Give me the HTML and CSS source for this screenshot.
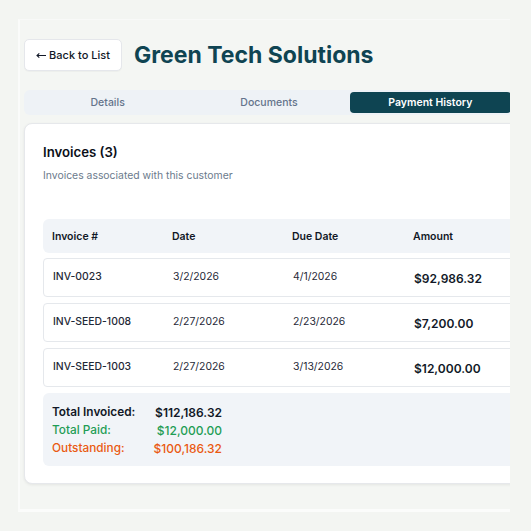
FILE: index.html
```html
<!DOCTYPE html>
<html lang="en">
<head>
<meta charset="utf-8">
<title>Green Tech Solutions</title>
<link rel="stylesheet" href="styles.css">
</head>
<body>
<div class="frame">
  <div class="page">
    <header class="page-header">
      <button class="back-btn"><svg class="arrow" width="10" height="7" viewBox="0 0 10 7" aria-hidden="true"><path d="M10 3.5H1M3.3 1.3L1 3.5L3.3 5.7" fill="none" stroke="#111827" stroke-width="1.1"/></svg>Back to List</button>
      <h1 class="title">Green Tech Solutions</h1>
    </header>
    <nav class="tabs">
      <div class="tab">Details</div>
      <div class="tab">Documents</div>
      <div class="tab active">Payment History</div>
    </nav>
    <section class="card">
      <h2 class="card-title">Invoices (3)</h2>
      <p class="card-sub">Invoices associated with this customer</p>
      <div class="table">
        <div class="thead">
          <div>Invoice #</div><div>Date</div><div>Due Date</div><div>Amount</div>
        </div>
        <div class="row">
          <div class="inv">INV-0023</div><div>3/2/2026</div><div>4/1/2026</div><div class="amt">$92,986.32</div>
        </div>
        <div class="row">
          <div class="inv">INV-SEED-1008</div><div>2/27/2026</div><div>2/23/2026</div><div class="amt">$7,200.00</div>
        </div>
        <div class="row">
          <div class="inv">INV-SEED-1003</div><div>2/27/2026</div><div>3/13/2026</div><div class="amt">$12,000.00</div>
        </div>
        <div class="summary">
          <div class="lbl">Total Invoiced:</div><div class="val">$112,186.32</div>
          <div class="lbl paid">Total Paid:</div><div class="val paid">$12,000.00</div>
          <div class="lbl out">Outstanding:</div><div class="val out">$100,186.32</div>
        </div>
      </div>
    </section>
  </div>
</div>
</body>
</html>
```

FILE: styles.css
```css
* { box-sizing: border-box; }
html, body { margin: 0; }
body {
  background: #f3f5f2;
  font-family: Inter, "Noto Sans", "Liberation Sans", sans-serif;
  padding: 19px 0 0 18px;
  color: #111827;
}
.frame {
  width: 492px;
  height: 493px;
  overflow: hidden;
  background: #f4f6f3;
  border-left: 2px solid #fafbfa;
  border-top: 1px solid #f8f9f8;
  border-bottom: 3px solid #fbfcfb;
}
.page {
  width: 520px;
  margin-left: 4px;
  padding-top: 19px;
}
.page-header {
  display: flex;
  align-items: center;
  gap: 12px;
}
.back-btn {
  height: 32px;
  width: 98px;
  padding: 0;
  display: flex;
  align-items: center;
  justify-content: center;
  gap: 3px;
  background: #ffffff;
  border: 1px solid #e5e7eb;
  border-radius: 5px;
  font-family: inherit;
  font-size: 11px;
  font-weight: 500;
  color: #111827;
  box-shadow: 0 1px 1px rgba(0,0,0,0.03);
}
.arrow { display: block; }
.title {
  margin: 0;
  font-size: 23px;
  font-weight: 700;
  color: #0f4452;
}
.tabs {
  margin-top: 19px;
  width: 490px;
  height: 25px;
  display: grid;
  grid-template-columns: 1fr 1fr 1fr;
  padding: 2px 3px;
  background: #eef2f6;
  border-radius: 6px;
}
.tab {
  display: flex;
  align-items: center;
  justify-content: center;
  font-size: 10.5px;
  font-weight: 500;
  color: #64748b;
  border-radius: 4px;
}
.tab.active {
  background: #0e4452;
  color: #ffffff;
  font-weight: 600;
}
.card {
  margin-top: 8px;
  background: #ffffff;
  border: 1px solid #e6e8eb;
  border-radius: 8px;
  box-shadow: 0 1px 3px rgba(0,0,0,0.07);
  padding: 18px 18px 17px 18px;
}
.card-title {
  margin: 0;
  font-size: 13.2px;
  font-weight: 600;
  line-height: 20px;
  color: #0b0f19;
}
.card-sub {
  margin: 6px 0 0 0;
  font-size: 10.4px;
  line-height: 16px;
  color: #6b7a8c;
}
.table {
  margin-top: 35px;
  display: flex;
  flex-direction: column;
  gap: 6px;
}
.thead, .row {
  display: grid;
  grid-template-columns: 120px 120px 121px 1fr;
  align-items: center;
  padding: 0 9px;
}
.thead {
  height: 34px;
  background: #f1f4f8;
  border-radius: 6px;
  font-size: 10.5px;
  font-weight: 600;
  color: #111827;
  margin-bottom: -1px;
}
.row {
  height: 39px;
  border: 1px solid #e5e8ec;
  border-radius: 4px;
  font-size: 10.4px;
  color: #1f2937;
  padding-bottom: 2px;
}
.row .inv { font-weight: 500; }
.row .amt {
  font-size: 12px;
  font-weight: 600;
  color: #111827;
  padding-top: 3px;
}
.summary {
  display: grid;
  grid-template-columns: 98px 72px;
  grid-auto-rows: 18px;
  align-items: center;
  padding: 10px 9px 9px 9px;
  background: #f1f4f8;
  border-radius: 6px;
}
.lbl {
  font-size: 11.8px;
  font-weight: 600;
  color: #111827;
}
.val {
  text-align: right;
  font-size: 12px;
  font-weight: 600;
  color: #111827;
}
.lbl.paid, .lbl.out, .val.paid, .val.out { font-weight: 500; }
.paid { color: #1f9d55; }
.out { color: #ea5a12; }
```
